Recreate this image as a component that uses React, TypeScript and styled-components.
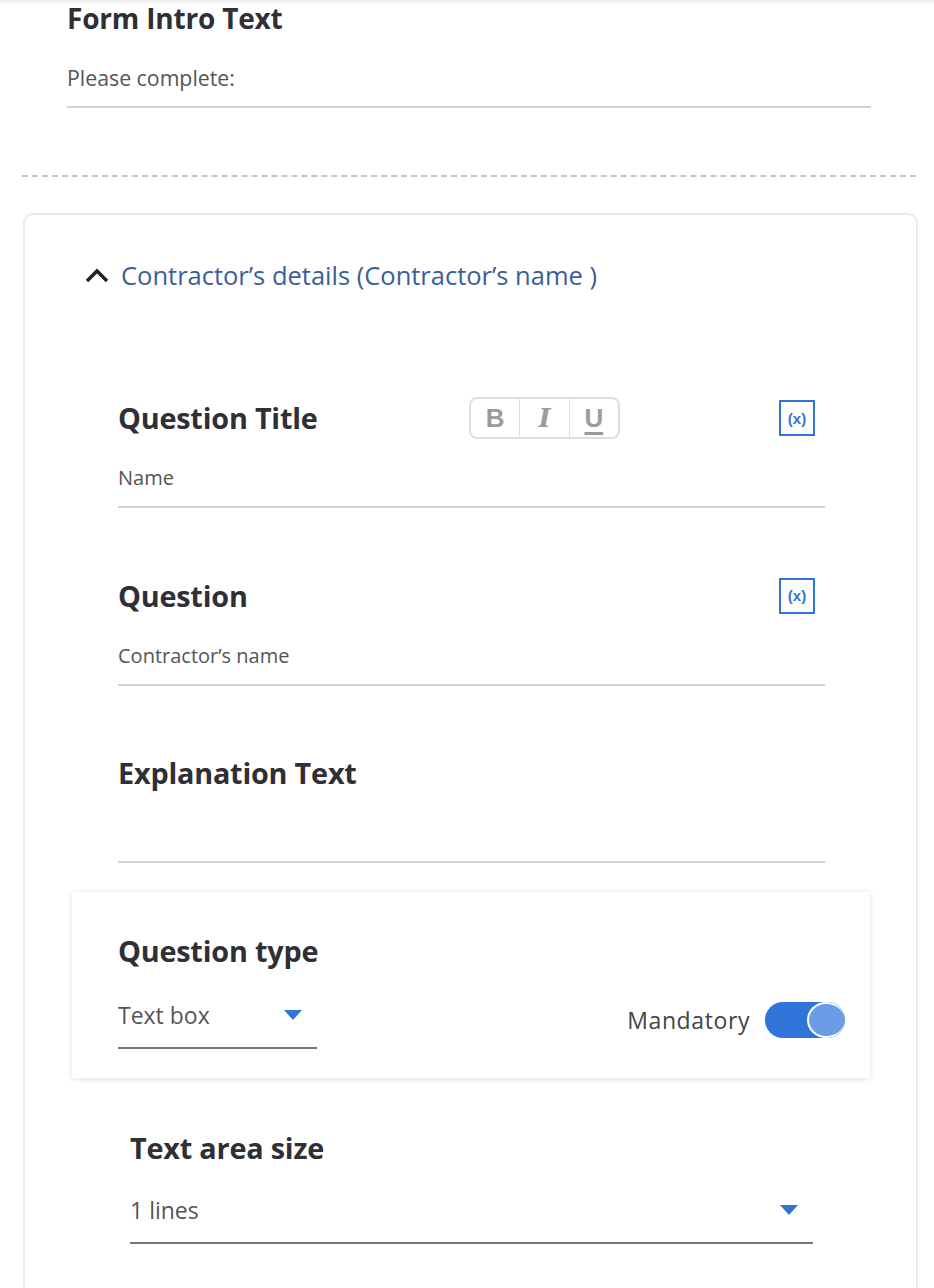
import React from "react";
import styled, { createGlobalStyle } from "styled-components";

const Global = createGlobalStyle`
  html, body { margin: 0; padding: 0; background: #fff; }
  body { font-family: "Open Sans", Lato, sans-serif; color: #333; }
  * { box-sizing: border-box; }
`;

const Page = styled.div`
  width: 934px;
  min-height: 1288px;
  overflow: hidden;
  box-shadow: inset 0 7px 7px -7px rgba(0, 0, 0, 0.14);
`;

const IntroSection = styled.section`
  padding: 0 63px 0 67px;
`;

const IntroTitle = styled.h2`
  margin: 0;
  font-size: 28px;
  line-height: 36px;
  font-weight: 700;
  color: #2f2f35;
  letter-spacing: -0.2px;
`;

const Field = styled.div<{ $top?: number; $size?: number }>`
  margin-top: ${(p) => p.$top ?? 27}px;
  min-height: 42px;
  padding-bottom: 16px;
  border-bottom: 2px solid #d2d2d2;
  font-size: ${(p) => p.$size ?? 20}px;
  line-height: 24px;
  color: #555;
`;

const Divider = styled.hr`
  margin: 67px 18px 0 22px;
  border: 0;
  border-top: 2px dashed #c4c4c4;
`;

const Card = styled.section`
  margin: 36px 16px 0 23px;
  border: 2px solid #ebebeb;
  border-bottom: 0;
  border-radius: 10px 10px 0 0;
  padding-bottom: 80px;
`;

const CardHeader = styled.div`
  display: flex;
  align-items: center;
  gap: 12px;
  padding: 44px 0 0 60px;
  height: 76px;
  font-size: 25.5px;
  line-height: 32px;
  color: #3a6095;
`;

const QuestionBlock = styled.div`
  margin-top: 106px;
  padding: 0 91px 0 93px;
`;

const FieldGroup = styled.div<{ $top?: number }>`
  margin-top: ${(p) => p.$top ?? 66.5}px;
`;

const LabelRow = styled.div`
  display: grid;
  grid-template-columns: 351px auto 1fr auto;
  align-items: center;
  height: 42px;
  padding-right: 10px;
`;

const Label = styled.h3`
  margin: 0;
  font-size: 28.8px;
  line-height: 36px;
  font-weight: 700;
  color: #2f2f35;
  letter-spacing: -0.2px;
`;

const Toolbar = styled.div`
  display: flex;
  width: 151px;
  height: 42px;
  border: 2px solid #dedede;
  border-radius: 8px;
  overflow: hidden;
`;

const ToolButton = styled.span<{ $kind: "b" | "i" | "u" }>`
  flex: 1;
  display: flex;
  align-items: center;
  justify-content: center;
  color: #9b9b9b;
  font-size: 26px;
  line-height: 1;
  font-weight: 700;
  font-family: ${(p) => (p.$kind === "i" ? '"DejaVu Serif", serif' : '"Liberation Sans", sans-serif')};
  font-style: ${(p) => (p.$kind === "i" ? "italic" : "normal")};
  text-decoration: ${(p) => (p.$kind === "u" ? "underline" : "none")};
  text-decoration-thickness: 3px;
  text-underline-offset: 5px;
  & + & { border-left: 1.5px solid #dedede; }
`;

const VarButton = styled.span`
  grid-column: 4;
  width: 36px;
  height: 36px;
  border: 2px solid #2f74d8;
  display: flex;
  align-items: center;
  justify-content: center;
  color: #2f74d8;
  font-size: 15px;
  font-weight: 700;
  font-family: "Liberation Sans", sans-serif;
`;

const TypePanel = styled.div`
  margin: 29px 46px 0 47px;
  padding: 41px 25px 29px 46px;
  box-shadow: 0 1px 6px rgba(0, 0, 0, 0.13);
  background: #fff;
`;

const ControlsRow = styled.div`
  display: flex;
  justify-content: space-between;
  align-items: flex-start;
  margin-top: 34px;
`;

const Select = styled.div<{ $width?: string }>`
  width: ${(p) => p.$width ?? "199px"};
  display: flex;
  align-items: center;
  justify-content: space-between;
  padding: 0 15px 20px 0;
  border-bottom: 2px solid #777;
  font-size: 23px;
  line-height: 24px;
  color: #555;
`;

const Caret = styled.span`
  width: 0;
  height: 0;
  border-left: 9px solid transparent;
  border-right: 9px solid transparent;
  border-top: 10px solid #2f74d8;
`;

const ToggleGroup = styled.label`
  display: flex;
  align-items: center;
  gap: 15px;
  margin-top: -1px;
  font-size: 23px;
  line-height: 36px;
  color: #444;
  letter-spacing: 0.6px;
`;

const Track = styled.span`
  position: relative;
  width: 80px;
  height: 36px;
  border-radius: 18px;
  background: #2f74d8;
`;

const Knob = styled.span`
  position: absolute;
  right: 0;
  top: 0;
  width: 38px;
  height: 36px;
  border-radius: 50%;
  background: #6a9de6;
  border: 2px solid #fff;
  border-right: 0;
`;

const SizeBlock = styled.div`
  margin-top: 52px;
  padding: 0 103px 0 105px;
`;

const SizeControls = styled.div`
  margin-top: 32px;
`;

function Chevron() {
  return (
    <svg width="24" height="16" viewBox="0 0 24 16" aria-hidden>
      <polyline points="2,14 12,4 22,14" fill="none" stroke="#222" strokeWidth="3.4" />
    </svg>
  );
}

function QuestionField({
  label,
  value,
  toolbar,
  variable = true,
  top,
}: {
  label: string;
  value: string;
  toolbar?: boolean;
  variable?: boolean;
  top?: number;
}) {
  return (
    <FieldGroup $top={top}>
      <LabelRow>
        <Label>{label}</Label>
        {toolbar && (
          <Toolbar>
            <ToolButton $kind="b">B</ToolButton>
            <ToolButton $kind="i">I</ToolButton>
            <ToolButton $kind="u">U</ToolButton>
          </Toolbar>
        )}
        {variable && <VarButton>(x)</VarButton>}
      </LabelRow>
      <Field>{value}</Field>
    </FieldGroup>
  );
}

export default function App() {
  return (
    <Page>
      <Global />
      <IntroSection>
        <IntroTitle>Form Intro Text</IntroTitle>
        <Field $top={30} $size={21.3} style={{ minHeight: 0 }}>
          Please complete:
        </Field>
      </IntroSection>
      <Divider />
      <Card>
        <CardHeader>
          <Chevron />
          <span>Contractor’s details (Contractor’s name )</span>
        </CardHeader>
        <QuestionBlock>
          <QuestionField label="Question Title" value="Name" toolbar top={0} />
          <QuestionField label="Question" value="Contractor’s name" />
          <QuestionField label="Explanation Text" value="" variable={false} />
        </QuestionBlock>
        <TypePanel>
          <Label>Question type</Label>
          <ControlsRow>
            <Select>
              <span>Text box</span>
              <Caret />
            </Select>
            <ToggleGroup>
              Mandatory
              <Track>
                <Knob />
              </Track>
            </ToggleGroup>
          </ControlsRow>
        </TypePanel>
        <SizeBlock>
          <Label>Text area size</Label>
          <SizeControls>
            <Select $width="100%">
              <span>1 lines</span>
              <Caret />
            </Select>
          </SizeControls>
        </SizeBlock>
      </Card>
    </Page>
  );
}
